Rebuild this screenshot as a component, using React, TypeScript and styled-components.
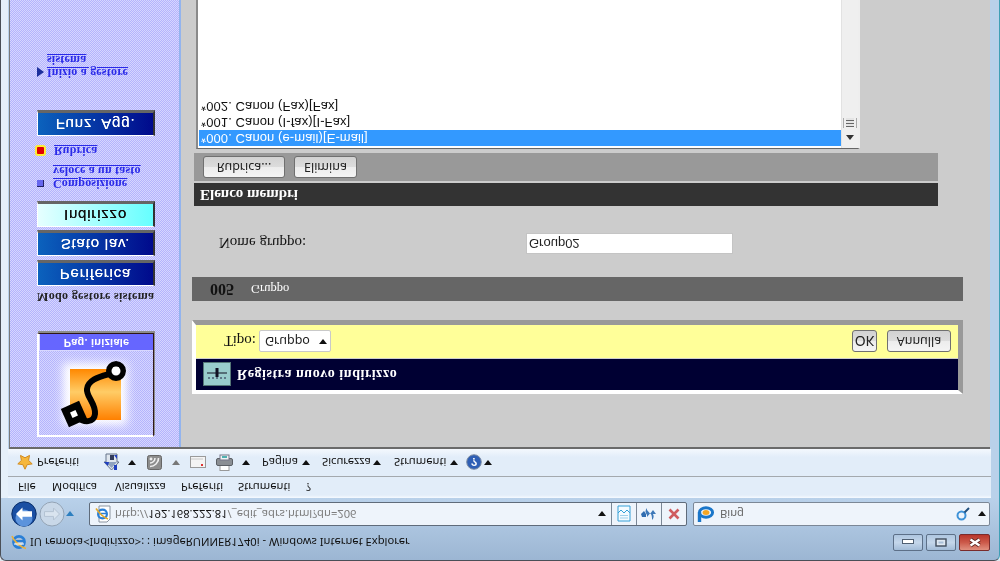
import React from "react";
import styled, { createGlobalStyle } from "styled-components";

// The whole window is photographed upside down, so it is laid out upright and mirrored once.

const GlobalStyle = createGlobalStyle`
  html, body {
    margin: 0;
    width: 1000px;
    height: 561px;
    overflow: hidden;
    background: #dfe7ef;
  }
  * { box-sizing: border-box; }
`;

const uiFont = `"Noto Sans", "Liberation Sans", sans-serif`;
const serifFont = `"Liberation Serif", serif`;
const dither = `repeating-conic-gradient(#b4b4fc 0 25%, #d6d6ff 0 50%) 0 0 / 2px 2px`;

// Window chrome

const Win = styled.div`
  width: 1000px;
  height: 561px;
  transform: scaleY(-1);
  display: flex;
  flex-direction: column;
  overflow: hidden;
  border-radius: 6px 6px 0 0;
  border: 1px solid #4a4f57;
  border-bottom: 0;
  border-right-color: #3f9fb5;
  background:
    linear-gradient(90deg, #e6f0fa 0 7px, transparent 7px) 0 62px no-repeat,
    linear-gradient(180deg, #9cb6d3 0, #b9d1ea 62px, #b9d1ea 100%);
`;

const TitleBar = styled.div`
  height: 30px;
  flex: none;
  display: flex;
  align-items: flex-end;
  padding: 0 9px 4px 10px;
`;

const TitleText = styled.span`
  font: 11.2px/16px ${uiFont};
  color: #111;
  margin-left: 3px;
  white-space: nowrap;
`;

const CaptionGroup = styled.div`
  margin-left: auto;
  display: flex;
  gap: 3px;
  height: 17px;
`;

const CaptionButton = styled.div<{ $close?: boolean }>`
  width: ${(p) => (p.$close ? 31 : 30)}px;
  height: 17px;
  border: 1px solid ${(p) => (p.$close ? "#7a2b2b" : "#5d7088")};
  border-radius: 2px;
  display: flex;
  align-items: center;
  justify-content: center;
  background: ${(p) =>
    p.$close
      ? "linear-gradient(180deg,#e0907f 0,#cc5a4a 50%,#b8352b 100%)"
      : "linear-gradient(180deg,#a3bcd8 0,#c4d6ea 50%,#aec6e0 100%)"};
`;

const AddressRow = styled.div`
  height: 32px;
  flex: none;
  display: flex;
  align-items: center;
  padding: 0 9px 0 10px;
`;

const NavCircles = styled.div`
  width: 78px;
  display: flex;
  align-items: center;
  gap: 2px;
`;

const AddressBox = styled.div`
  width: 598px;
  height: 24px;
  display: flex;
  align-items: center;
  background: #eef4fb;
  border: 1px solid #5f6b7a;
  border-radius: 2px;
  padding-left: 5px;
`;

const UrlText = styled.span`
  font: 11.2px/16px ${uiFont};
  color: #7d7d7d;
  margin-left: 4px;
  white-space: nowrap;
  flex: 1;
  b {
    font-weight: 400;
    color: #111;
  }
`;

const AddressTool = styled.div`
  width: 25px;
  height: 22px;
  border-left: 1px solid #7b8796;
  display: flex;
  align-items: center;
  justify-content: center;
`;

const SearchBox = styled.div`
  margin-left: 6px;
  width: 297px;
  height: 24px;
  display: flex;
  align-items: center;
  background: #eef4fb;
  border: 1px solid #7b8796;
  border-radius: 2px;
  padding: 0 3px 0 3px;
`;

const SearchText = styled.span`
  font: 11.2px/16px ${uiFont};
  color: #666;
  margin-left: 5px;
  flex: 1;
`;

const Caret = styled.i<{ $up?: boolean; $color?: string; $ml?: number; $mr?: number }>`
  display: block;
  flex: none;
  width: 0;
  height: 0;
  margin-left: ${(p) => p.$ml ?? 0}px;
  margin-right: ${(p) => p.$mr ?? 0}px;
  border-left: 4.5px solid transparent;
  border-right: 4.5px solid transparent;
  border-${(p) => (p.$up ? "bottom" : "top")}: 5px solid ${(p) => p.$color ?? "#111"};
`;

const MenuBar = styled.div`
  height: 22px;
  flex: none;
  margin: 0 8px 0 7px;
  display: flex;
  align-items: center;
  padding-left: 10px;
  background: linear-gradient(180deg, #f6faff 0, #e2edf9 3px, #e2edf9 100%);
  border-bottom: 1px solid #a4a9ae;
  font: 11.2px/16px ${uiFont};
  color: #111;
`;

const MenuEntry = styled.span<{ $w: number }>`
  width: ${(p) => p.$w}px;
  flex: none;
`;

const CommandBar = styled.div`
  height: 27px;
  flex: none;
  margin: 0 8px 0 7px;
  display: flex;
  align-items: center;
  padding-left: 9px;
  background: linear-gradient(180deg, #e2edf9 0, #e2edf9 70%, #f4f8fd 100%);
  font: 11.2px/16px ${uiFont};
  color: #111;
`;

const CommandItem = styled.span<{ $ml?: number; $w?: number }>`
  display: flex;
  align-items: center;
  flex: none;
  margin-left: ${(p) => p.$ml ?? 0}px;
  width: ${(p) => (p.$w ? `${p.$w}px` : "auto")};
`;

// Page

const Page = styled.div`
  flex: 1;
  min-height: 0;
  margin: 0 9px 0 8px;
  display: flex;
  background: #cccccc;
  border-top: 2px solid #6a6a6a;
  border-left: 1px solid #7b7b7b;
`;

const Sidebar = styled.nav`
  width: 171px;
  flex: none;
  display: flex;
  flex-direction: column;
  align-items: flex-start;
  padding: 10px 0 0 27px;
  background: ${dither};
  border-right: 2px solid #93b4ee;
`;

const HomeCard = styled.div`
  width: 117px;
  height: 104px;
  flex: none;
  display: flex;
  flex-direction: column;
  background: ${dither};
  border-top: 2px solid #fff;
  border-left: 2px solid #fff;
  border-right: 1px solid #301818;
  border-bottom: 1px solid #301818;
  box-shadow: 1px 2px 0 #8c8c8c;
`;

const HomeLabel = styled.div`
  height: 18px;
  margin-top: auto;
  background: #6666ff;
  border: 1px solid #d8d8ff;
  border-right: 0;
  border-bottom: 0;
  color: #fff;
  text-align: center;
  font: bold 11px/15px "Liberation Sans", sans-serif;
  letter-spacing: 0.2px;
`;

const ModeCaption = styled.div`
  margin-top: 29px;
  font: bold 12px/14px ${serifFont};
  color: #222;
  white-space: nowrap;
  letter-spacing: 0.35px;
`;

const SideButton = styled.div<{ $active?: boolean; $mt: number }>`
  width: 118px;
  height: 26px;
  flex: none;
  margin-top: ${(p) => p.$mt}px;
  display: flex;
  align-items: center;
  justify-content: center;
  background: ${(p) =>
    p.$active
      ? "linear-gradient(90deg,#e6ffff 0,#66ffff 100%)"
      : "linear-gradient(90deg,#0b62bd 0,#000a8c 100%)"};
  color: ${(p) => (p.$active ? "#111" : "#fff")};
  font: 15px/18px "Liberation Sans", sans-serif;
  letter-spacing: 0.8px;
  text-shadow: 0 0 0.6px currentColor;
  border-top: 1px solid #fff;
  border-left: 1px solid #fff;
  border-right: 2px solid #333;
  border-bottom: 3px solid #666;
`;

const SideLink = styled.div<{ $mt: number; $gap: number }>`
  margin-top: ${(p) => p.$mt}px;
  display: flex;
  align-items: flex-start;
  gap: ${(p) => p.$gap}px;
  font: bold 12px/13px ${serifFont};
  letter-spacing: 0.2px;
  color: #2a2ae8;
  text-decoration: underline;
  white-space: nowrap;
`;

const Bullet = styled.span`
  flex: none;
  width: 7px;
  height: 7px;
  margin-top: 3px;
  background: #6666ee;
  border-top: 1px solid #222266;
  border-right: 1px solid #222266;
`;

const RedBullet = styled.span`
  flex: none;
  width: 11px;
  height: 11px;
  margin: 1px 0 0 -2px;
  background: #e00000;
  border: 2px solid #ffee33;
  border-radius: 3px;
`;

const ArrowBullet = styled.span`
  flex: none;
  width: 0;
  height: 0;
  margin-top: 2px;
  border-left: 7px solid #1c2f9c;
  border-top: 5px solid transparent;
  border-bottom: 5px solid transparent;
`;

const Main = styled.main`
  flex: 1;
  min-width: 0;
  padding: 53px 0 0 11px;
  display: flex;
  flex-direction: column;
  align-items: flex-start;
`;

const HeaderBox = styled.div`
  width: 771px;
  height: 74px;
  flex: none;
  display: flex;
  flex-direction: column;
  gap: 1px;
  border-style: solid;
  border-width: 4px 5px 5px 4px;
  border-color: #fff #999 #999 #fff;
  background: #cfcfcf;
`;

const NavyRow = styled.div`
  height: 31px;
  flex: none;
  display: flex;
  align-items: center;
  padding-left: 7px;
  background: #000033;
  color: #fff;
  font: bold 14px/16px ${serifFont};
  letter-spacing: 0.55px;
`;

const NavyIcon = styled.span`
  width: 28px;
  height: 24px;
  margin-right: 6px;
  display: flex;
  background: #99cccc;
  border: 1px solid #557777;
`;

const YellowRow = styled.div`
  flex: 1;
  display: flex;
  align-items: center;
  padding: 0 7px 0 28px;
  background: #ffff99;
  font: 15px/16px ${serifFont};
  color: #111;
`;

const TypeSelect = styled.div`
  width: 72px;
  height: 22px;
  margin-left: 3px;
  display: flex;
  align-items: center;
  padding: 0 3px 0 5px;
  justify-content: space-between;
  background: #fff;
  border: 1px solid #c9c9c9;
  border-radius: 2px;
  font: 12.5px/16px ${uiFont};
  color: #222;
`;

const AeroButton = styled.div<{ $w: number; $ml?: string; $size?: number }>`
  width: ${(p) => p.$w}px;
  height: 22px;
  margin-left: ${(p) => p.$ml ?? "0"};
  display: flex;
  align-items: center;
  justify-content: center;
  flex: none;
  background: linear-gradient(180deg, #f4f4f4 0, #ececec 50%, #dcdcdc 50%, #d2d2d2 100%);
  border: 1px solid #707070;
  border-radius: 3px;
  font: ${(p) => p.$size ?? 12.5}px/16px ${uiFont};
  color: #222;
`;

const GrayBar = styled.div`
  width: 771px;
  height: 24px;
  margin-top: 19px;
  flex: none;
  display: flex;
  align-items: center;
  padding-left: 18px;
  background: #666666;
`;

const ItemNumber = styled.b`
  font: bold 16px/16px ${serifFont};
  color: #111;
  width: 41px;
`;

const ItemKind = styled.span`
  font: 12.5px/14px ${serifFont};
  color: #fff;
`;

const NameRow = styled.div`
  margin-top: 23px;
  height: 21px;
  flex: none;
  display: flex;
  align-items: center;
  padding-left: 27px;
  font: 15px/16px ${serifFont};
  color: #111;
`;

const NameLabel = styled.label`
  width: 307px;
`;

const NameInput = styled.div`
  width: 207px;
  height: 21px;
  padding-left: 2px;
  background: #fff;
  border: 1px solid #c4c4c4;
  font: 13px/19px "Liberation Sans", sans-serif;
  color: #222;
`;

const MembersTitle = styled.div`
  width: 744px;
  height: 23px;
  margin: 27px 0 0 2px;
  flex: none;
  padding-left: 6px;
  background: #333333;
  color: #fff;
  font: bold 15px/22px ${serifFont};
`;

const MembersTools = styled.div`
  width: 744px;
  height: 28px;
  margin: 2px 0 0 2px;
  flex: none;
  display: flex;
  align-items: center;
  gap: 9px;
  padding-left: 9px;
  background: #999999;
`;

const MemberList = styled.div`
  width: 664px;
  flex: 1;
  min-height: 0;
  margin: 4px 0 0 4px;
  display: flex;
  background: #fff;
  border-top: 1px solid #666;
  border-left: 2px solid #8a8a8a;
  border-right: 2px solid #eee;
  padding: 0 0 0 1px;
`;

const MemberRows = styled.div`
  flex: 1;
  padding-top: 2px;
`;

const MemberRow = styled.div<{ $selected?: boolean }>`
  height: 16px;
  padding-left: 2px;
  font: 13px/16px "Liberation Sans", sans-serif;
  letter-spacing: 0.1px;
  color: ${(p) => (p.$selected ? "#fff" : "#111")};
  background: ${(p) => (p.$selected ? "#3399ff" : "transparent")};
`;

const ScrollTrack = styled.div`
  width: 17px;
  flex: none;
  display: flex;
  flex-direction: column;
  align-items: center;
  background: #efefef;
  border-left: 1px solid #e2e2e2;
  padding-top: 8px;
`;

const ScrollGrip = styled.div`
  width: 14px;
  height: 10px;
  margin-top: 7px;
  border-left: 1px solid #aaa;
  border-right: 1px solid #aaa;
  background: repeating-linear-gradient(180deg, #666 0 1px, #e4e4e4 1px 3px) center 1px / 8px 100% no-repeat;
`;

// Drawings

const IeLogo = () => (
  <svg width="16" height="16" viewBox="0 0 16 16">
    <circle cx="8" cy="8" r="5.6" fill="none" stroke="#2a7fd6" strokeWidth="2.6" />
    <path d="M3 9h10" stroke="#2a7fd6" strokeWidth="2" />
    <path d="M1 14C3 9 9 3 15 1.5" fill="none" stroke="#e8b13a" strokeWidth="1.6" />
    <path d="M3 6h10" stroke="#fff" strokeWidth="1" />
  </svg>
);

const PageIe = () => (
  <svg width="16" height="18" viewBox="0 0 16 18" style={{ flex: "none" }}>
    <path d="M4 1h8l3 3v13H4z" fill="#fff" stroke="#8a94a0" />
    <circle cx="7.5" cy="9" r="4.4" fill="none" stroke="#2a7fd6" strokeWidth="2.2" />
    <path d="M3.5 9.5h8" stroke="#2a7fd6" strokeWidth="1.6" />
    <path d="M1 14.5C4 10 8 6 13 4" fill="none" stroke="#e3a92c" strokeWidth="1.6" />
  </svg>
);

const BackButton = () => (
  <svg width="26" height="26" viewBox="0 0 26 26" style={{ flex: "none" }}>
    <circle cx="13" cy="13" r="12.2" fill="#1a4fa3" stroke="#0b2f6a" />
    <circle cx="13" cy="9" r="8.5" fill="#5c93dc" />
    <path d="M5 13l6.5-6.5v3.8h9.5v5.4h-9.5v3.8z" fill="#fff" />
  </svg>
);

const ForwardButton = () => (
  <svg width="26" height="26" viewBox="0 0 26 26" style={{ flex: "none" }}>
    <circle cx="13" cy="13" r="12" fill="#c9d8e8" stroke="#93a3b5" />
    <path d="M20.5 13l-6-6v3.6h-9v4.8h9V19z" fill="#d9e4ef" stroke="#b4c3d3" />
  </svg>
);

const CompatIcon = () => (
  <svg width="14" height="17" viewBox="0 0 14 17">
    <path d="M1 1h12v15H1z" fill="#f4fbff" stroke="#34a0d8" />
    <path d="M1 9l3 3 3-3 3 3 3-3" fill="none" stroke="#34a0d8" />
    <path d="M3 4h8M3 6.5h8" stroke="#9fd0ea" />
  </svg>
);

const RefreshIcon = () => (
  <svg width="16" height="16" viewBox="0 0 16 16">
    <path d="M6 14C4 12 4 9 6 7V5l3 3.5L6 12z" fill="#3d78b8" />
    <path d="M1 5h4v3l-2 3L0 8z" fill="#2f6cb0" />
    <path d="M11 2c2 2 2 4 1 6h3l-3 4-3-4h1c1-2 1-4 1-6z" fill="#3d78b8" />
  </svg>
);

const StopIcon = () => (
  <svg width="12" height="12" viewBox="0 0 12 12">
    <path d="M1.5 1.5l9 9M10.5 1.5l-9 9" stroke="#cf5b5f" strokeWidth="2.6" />
  </svg>
);

const BingIcon = () => (
  <svg width="18" height="16" viewBox="0 0 18 16" style={{ flex: "none" }}>
    <path d="M2.5 0v10" stroke="#1a76c9" strokeWidth="3.4" />
    <ellipse cx="9" cy="9.5" rx="6.6" ry="4.8" fill="none" stroke="#1a76c9" strokeWidth="3" />
    <ellipse cx="9" cy="9.5" rx="3.4" ry="2.4" fill="#f5a623" />
  </svg>
);

const SearchGlass = () => (
  <svg width="14" height="14" viewBox="0 0 14 14" style={{ flex: "none" }}>
    <circle cx="5.5" cy="5.5" r="4" fill="none" stroke="#3f93d8" strokeWidth="2" />
    <path d="M8.5 8.5l4.5 4.5" stroke="#20507e" strokeWidth="2" />
  </svg>
);

const StarIcon = () => (
  <svg width="16" height="16" viewBox="0 0 16 16" style={{ flex: "none" }}>
    <path
      d="M8 .8l2.2 4.6 5 .7-3.6 3.5.9 5L8 12.2l-4.5 2.4.9-5L.8 6.1l5-.7z"
      fill="#f6b73c"
      stroke="#d18a1e"
    />
  </svg>
);

const HomeIcon = () => (
  <svg width="17" height="18" viewBox="0 0 17 18" style={{ flex: "none" }}>
    <path d="M8.5 1L16 9h-2v8H3V9H1z" fill="#dfe6ee" stroke="#66758a" />
    <path d="M3 9L8.5 3 14 9" fill="#8fa2bf" />
    <rect x="7" y="11" width="4" height="5" fill="#323c5c" />
    <path d="M1 9l4-4 1 4zM11 16h3v-4z" fill="#1f3fc0" />
    <rect x="11" y="1" width="3" height="5" fill="#1f3fc0" />
  </svg>
);

const FeedIcon = () => (
  <svg width="15" height="15" viewBox="0 0 15 15" style={{ flex: "none" }}>
    <rect x=".5" y=".5" width="14" height="14" rx="2" fill="#8d8d8d" stroke="#666" />
    <circle cx="4" cy="11" r="1.5" fill="#eee" />
    <path d="M3 7a5 5 0 0 1 5 5M3 3.5a8.5 8.5 0 0 1 8.5 8.5" fill="none" stroke="#eee" strokeWidth="1.6" />
  </svg>
);

const MailIcon = () => (
  <svg width="16" height="12" viewBox="0 0 16 12" style={{ flex: "none" }}>
    <rect x=".5" y=".5" width="15" height="11" fill="#f4f4f4" stroke="#9a9a9a" />
    <rect x="11" y="2" width="2" height="2" fill="#d33" />
    <path d="M1 9h12" stroke="#c9c9c9" />
  </svg>
);

const PrinterIcon = () => (
  <svg width="17" height="17" viewBox="0 0 17 17" style={{ flex: "none" }}>
    <rect x="4" y="0.5" width="9" height="6" fill="#fff" stroke="#999" />
    <rect x=".5" y="5.5" width="16" height="7" rx="1.5" fill="#8b8f94" stroke="#5c6066" />
    <rect x="4" y="11" width="9" height="5" fill="#eef3f4" stroke="#778" />
    <path d="M6 14h5" stroke="#4fb0b0" strokeWidth="2" />
  </svg>
);

const HelpIcon = () => (
  <svg width="16" height="16" viewBox="0 0 16 16" style={{ flex: "none" }}>
    <circle cx="8" cy="8" r="7.3" fill="#2f5fb5" stroke="#7f8ea5" />
    <text x="8" y="12" textAnchor="middle" fontSize="11" fontWeight="700" fill="#fff" fontFamily="Liberation Sans">
      ?
    </text>
  </svg>
);

const LevelsIcon = () => (
  <svg width="26" height="22" viewBox="0 0 26 22">
    <path d="M5 6v2M9 6v2M13 6v2M17 6v2M21 6v2" stroke="#224" />
    <path d="M3 12h20" stroke="#112" />
    <path d="M13 8v9" stroke="#112" strokeWidth="3" />
  </svg>
);

const HomeArt = () => (
  <svg width="113" height="84" viewBox="0 0 113 84" style={{ flex: "none" }}>
    <defs>
      <linearGradient id="tile" x1="0" y1="0" x2="0" y2="1">
        <stop offset="0" stopColor="#ff8000" />
        <stop offset="0.55" stopColor="#ffcc66" />
        <stop offset="1" stopColor="#ff8800" />
      </linearGradient>
      <filter id="glow" x="-30%" y="-30%" width="160%" height="160%">
        <feGaussianBlur stdDeviation="5" />
      </filter>
    </defs>
    <g filter="url(#glow)" fill="#fff">
      <rect x="24" y="10" width="64" height="62" />
    </g>
    <rect x="31" y="15" width="51" height="51" fill="url(#tile)" />
    <path
      d="M70 61C60 58 49 55 48 46C47 38 57 32 56 21C55 12 45 12 38 18"
      fill="none"
      stroke="#000"
      strokeWidth="6"
    />
    <circle cx="77" cy="64" r="10" fill="#000" />
    <circle cx="77" cy="64" r="4.5" fill="#fff" />
    <g transform="rotate(24 35 21)">
      <rect x="25" y="11" width="20" height="20" fill="#000" />
      <rect x="32" y="18" width="6" height="6" fill="#fff" />
    </g>
  </svg>
);

const CloseGlyph = () => (
  <svg width="14" height="11" viewBox="0 0 14 11">
    <path d="M2.5 2.5l9 6M11.5 2.5l-9 6" stroke="#5a2420" strokeWidth="4" />
    <path d="M2.5 2.5l9 6M11.5 2.5l-9 6" stroke="#fff" strokeWidth="2.4" />
  </svg>
);

const App = () => (
  <>
    <GlobalStyle />
    <Win>
      <TitleBar>
        <IeLogo />
        <TitleText>IU remota&lt;Indirizzo&gt;: : imageRUNNER1740i - Windows Internet Explorer</TitleText>
        <CaptionGroup>
          <CaptionButton>
            <svg width="12" height="8" viewBox="0 0 12 8">
              <rect x=".5" y="2.5" width="11" height="4" fill="#fff" stroke="#4f5f72" />
            </svg>
          </CaptionButton>
          <CaptionButton>
            <svg width="12" height="9" viewBox="0 0 12 9">
              <rect x="1" y="1" width="10" height="7" fill="#dfe8f2" stroke="#3f4c5c" strokeWidth="1.4" />
              <rect x="3.5" y="3.5" width="5" height="2" fill="#a9bfd8" />
            </svg>
          </CaptionButton>
          <CaptionButton $close>
            <CloseGlyph />
          </CaptionButton>
        </CaptionGroup>
      </TitleBar>
      <AddressRow>
        <NavCircles>
          <BackButton />
          <ForwardButton />
          <Caret $color="#2d7fbf" $ml={-1} />
        </NavCircles>
        <AddressBox>
          <PageIe />
          <UrlText>
            http://<b>192.168.222.81</b>/_edit_adrs.html?dn=206
          </UrlText>
          <Caret $mr={5} />
          <AddressTool>
            <CompatIcon />
          </AddressTool>
          <AddressTool>
            <RefreshIcon />
          </AddressTool>
          <AddressTool>
            <StopIcon />
          </AddressTool>
        </AddressBox>
        <SearchBox>
          <BingIcon />
          <SearchText>Bing</SearchText>
          <SearchGlass />
          <Caret $ml={8} />
        </SearchBox>
      </AddressRow>
      <MenuBar>
        <MenuEntry $w={34}>File</MenuEntry>
        <MenuEntry $w={63}>Modifica</MenuEntry>
        <MenuEntry $w={66}>Visualizza</MenuEntry>
        <MenuEntry $w={57}>Preferiti</MenuEntry>
        <MenuEntry $w={68}>Strumenti</MenuEntry>
        <MenuEntry $w={10}>?</MenuEntry>
      </MenuBar>
      <CommandBar>
        <StarIcon />
        <CommandItem $ml={4} $w={41}>Preferiti</CommandItem>
        <CommandItem $ml={25}><HomeIcon /></CommandItem>
        <Caret $ml={8} />
        <CommandItem $ml={11}><FeedIcon /></CommandItem>
        <Caret $ml={10} $color="#777" />
        <CommandItem $ml={10}><MailIcon /></CommandItem>
        <CommandItem $ml={10}><PrinterIcon /></CommandItem>
        <Caret $ml={9} />
        <CommandItem $ml={12} $w={36}>Pagina</CommandItem>
        <Caret $ml={4} />
        <CommandItem $ml={12} $w={47}>Sicurezza</CommandItem>
        <Caret $ml={4} />
        <CommandItem $ml={13} $w={52}>Strumenti</CommandItem>
        <Caret $ml={4} />
        <CommandItem $ml={8}><HelpIcon /></CommandItem>
        <Caret $ml={2} />
      </CommandBar>
      <Page>
        <Sidebar>
          <HomeCard>
            <HomeArt />
            <HomeLabel>Pag. iniziale</HomeLabel>
          </HomeCard>
          <ModeCaption>Modo gestore sistema</ModeCaption>
          <SideButton $mt={4}>Periferica</SideButton>
          <SideButton $mt={4}>Stato lav.</SideButton>
          <SideButton $mt={3} $active>Indirizzo</SideButton>
          <SideLink $mt={11} $gap={9}>
            <Bullet />
            <span>
              Composizione
              <br />
              veloce a un tasto
            </span>
          </SideLink>
          <SideLink $mt={7} $gap={8}>
            <RedBullet />
            <span>Rubrica</span>
          </SideLink>
          <SideButton $mt={8}>Funz. Agg.</SideButton>
          <SideLink $mt={31} $gap={3}>
            <ArrowBullet />
            <span>
              Inizio a gestore
              <br />
              sistema
            </span>
          </SideLink>
        </Sidebar>
        <Main>
          <HeaderBox>
            <NavyRow>
              <NavyIcon>
                <LevelsIcon />
              </NavyIcon>
              Registra nuovo indirizzo
            </NavyRow>
            <YellowRow>
              Tipo:
              <TypeSelect>
                Gruppo
                <Caret />
              </TypeSelect>
              <AeroButton $w={25} $ml="auto" $size={14}>OK</AeroButton>
              <AeroButton $w={64} $ml="10px">Annulla</AeroButton>
            </YellowRow>
          </HeaderBox>
          <GrayBar>
            <ItemNumber>005</ItemNumber>
            <ItemKind>Gruppo</ItemKind>
          </GrayBar>
          <NameRow>
            <NameLabel>Nome gruppo:</NameLabel>
            <NameInput>Group02</NameInput>
          </NameRow>
          <MembersTitle>Elenco membri</MembersTitle>
          <MembersTools>
            <AeroButton $w={82}>Rubrica...</AeroButton>
            <AeroButton $w={63}>Elimina</AeroButton>
          </MembersTools>
          <MemberList>
            <MemberRows>
              <MemberRow $selected>*000. Canon (e-mail)[E-mail]</MemberRow>
              <MemberRow>*001. Canon (I-fax)[I-Fax]</MemberRow>
              <MemberRow>*002. Canon (Fax)[Fax]</MemberRow>
            </MemberRows>
            <ScrollTrack>
              <Caret $up $color="#333" />
              <ScrollGrip />
            </ScrollTrack>
          </MemberList>
        </Main>
      </Page>
    </Win>
  </>
);

export default App;
